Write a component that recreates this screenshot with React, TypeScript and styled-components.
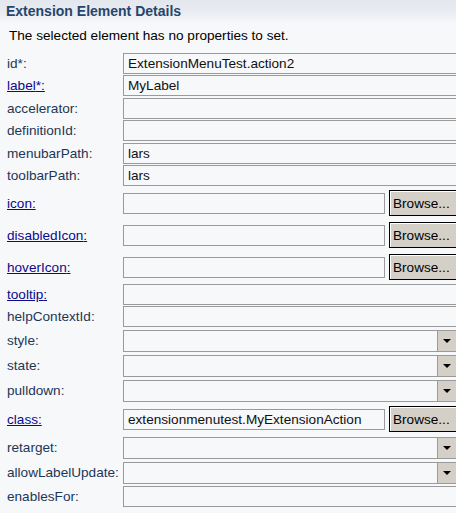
import * as React from "react";
import styled, { createGlobalStyle } from "styled-components";

type FieldKind = "text" | "file" | "select";

interface FieldSpec {
  name: string;
  kind: FieldKind;
  required?: boolean;
  link?: boolean;
  value?: string;
}

const fields: FieldSpec[] = [
  { name: "id", kind: "text", required: true, value: "ExtensionMenuTest.action2" },
  { name: "label", kind: "text", required: true, link: true, value: "MyLabel" },
  { name: "accelerator", kind: "text" },
  { name: "definitionId", kind: "text" },
  { name: "menubarPath", kind: "text", value: "lars" },
  { name: "toolbarPath", kind: "text", value: "lars" },
  { name: "icon", kind: "file", link: true },
  { name: "disabledIcon", kind: "file", link: true },
  { name: "hoverIcon", kind: "file", link: true },
  { name: "tooltip", kind: "text", link: true },
  { name: "helpContextId", kind: "text" },
  { name: "style", kind: "select" },
  { name: "state", kind: "select" },
  { name: "pulldown", kind: "select" },
  { name: "class", kind: "file", link: true, value: "extensionmenutest.MyExtensionAction" },
  { name: "retarget", kind: "select" },
  { name: "allowLabelUpdate", kind: "select" },
  { name: "enablesFor", kind: "text" }
];

const rowHeights: Record<FieldKind, string> = {
  text: "22.5px",
  file: "32px",
  select: "25px"
};

const GlobalStyle = createGlobalStyle`
  html, body {
    margin: 0;
    padding: 0;
    background: #f7f8fa;
    overflow: hidden;
  }
  body {
    font-family: "Liberation Sans", Arial, sans-serif;
    font-size: 13.6px;
  }
`;

const Panel = styled.div`
  width: 456px;
  height: 513px;
  overflow: hidden;
  background: #f7f8fa;
`;

const Header = styled.h2`
  margin: 0;
  height: 23px;
  padding: 2px 0 0 6px;
  box-sizing: border-box;
  font-size: 14px;
  font-weight: bold;
  line-height: 19px;
  color: #26456b;
  background: linear-gradient(#e3e7ee 0%, #e9ecf1 55%, #f7f8fa 100%);
  white-space: nowrap;
`;

const Note = styled.p`
  margin: 0;
  padding: 5px 0 0 9px;
  height: 29px;
  box-sizing: border-box;
  font-size: 13.6px;
  line-height: 16px;
  color: #000;
  white-space: nowrap;
`;

const Form = styled.div`
  display: flex;
  flex-direction: column;
  width: 470px;
`;

const Row = styled.div<{ $kind: FieldKind }>`
  display: flex;
  align-items: center;
  height: ${(p) => rowHeights[p.$kind]};
`;

const Label = styled.span<{ $link?: boolean }>`
  flex: 0 0 116px;
  padding-left: 7px;
  white-space: nowrap;
  color: ${(p) => (p.$link ? "#0a0a8c" : "#1c3658")};
  text-decoration: ${(p) => (p.$link ? "underline" : "none")};
  cursor: ${(p) => (p.$link ? "pointer" : "default")};
`;

const Control = styled.div`
  flex: 1;
  display: flex;
  align-items: center;
  gap: 4px;
  height: 100%;
`;

const TextBox = styled.div<{ $short?: boolean }>`
  box-sizing: border-box;
  height: 21px;
  width: ${(p) => (p.$short ? "262px" : "340px")};
  border: 1px solid #9a9a9a;
  background: #f7f8fa;
  padding: 0 4px;
  line-height: 19px;
  color: #111;
  white-space: nowrap;
  overflow: hidden;
`;

const SelectBox = styled.div`
  box-sizing: border-box;
  display: flex;
  height: 22px;
  width: 340px;
  border: 1px solid #9a9a9a;
  background: #f7f8fa;
`;

const SelectValue = styled.div`
  width: 313px;
`;

const SelectArrow = styled.div`
  flex: 0 0 22px;
  display: flex;
  align-items: center;
  justify-content: center;
  padding-right: 3px;
  box-sizing: border-box;
  background: #d4d0c8;
  border-left: 1px solid #9a9a9a;

  &::after {
    content: "";
    border-left: 4px solid transparent;
    border-right: 4px solid transparent;
    border-top: 4px solid #000;
  }
`;

const BrowseButton = styled.button`
  box-sizing: border-box;
  height: 26px;
  width: 74px;
  margin: 0;
  padding: 0 0 0 3px;
  text-align: left;
  font-family: "Liberation Sans", Arial, sans-serif;
  font-size: 13.6px;
  color: #000;
  background: #d4d0c8;
  border: 1px solid #000;
  box-shadow: inset 1px 1px 0 #fff;
  border-radius: 0;
`;

function Field({ spec }: { spec: FieldSpec }) {
  if (spec.kind === "select") {
    return (
      <SelectBox>
        <SelectValue />
        <SelectArrow />
      </SelectBox>
    );
  }
  if (spec.kind === "file") {
    return (
      <>
        <TextBox $short>{spec.value}</TextBox>
        <BrowseButton type="button">Browse...</BrowseButton>
      </>
    );
  }
  return <TextBox>{spec.value}</TextBox>;
}

export default function App() {
  return (
    <Panel>
      <GlobalStyle />
      <Header>Extension Element Details</Header>
      <Note>The selected element has no properties to set.</Note>
      <Form>
        {fields.map((f) => (
          <Row key={f.name} $kind={f.kind}>
            <Label $link={f.link}>
              {f.name}
              {f.required ? "*" : ""}:
            </Label>
            <Control>
              <Field spec={f} />
            </Control>
          </Row>
        ))}
      </Form>
    </Panel>
  );
}
